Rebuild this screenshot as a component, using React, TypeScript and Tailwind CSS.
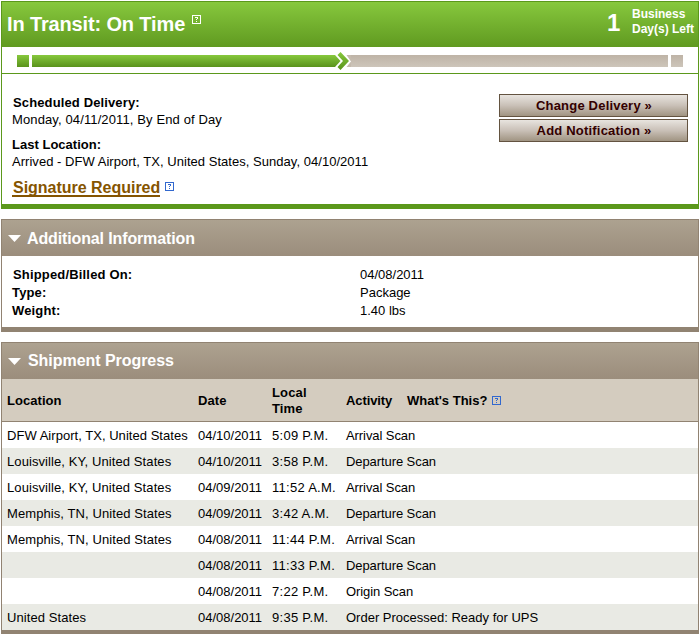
import React from "react";

type Scan = { place: string; date: string; time: string; activity: string };

const scans: Scan[] = [
  { place: "DFW Airport, TX, United States", date: "04/10/2011", time: "5:09 P.M.", activity: "Arrival Scan" },
  { place: "Louisville, KY, United States", date: "04/10/2011", time: "3:58 P.M.", activity: "Departure Scan" },
  { place: "Louisville, KY, United States", date: "04/09/2011", time: "11:52 A.M.", activity: "Arrival Scan" },
  { place: "Memphis, TN, United States", date: "04/09/2011", time: "3:42 A.M.", activity: "Departure Scan" },
  { place: "Memphis, TN, United States", date: "04/08/2011", time: "11:44 P.M.", activity: "Arrival Scan" },
  { place: "", date: "04/08/2011", time: "11:33 P.M.", activity: "Departure Scan" },
  { place: "", date: "04/08/2011", time: "7:22 P.M.", activity: "Origin Scan" },
  { place: "United States", date: "04/08/2011", time: "9:35 P.M.", activity: "Order Processed: Ready for UPS" },
];

function Help({ className }: { className: string }) {
  return (
    <svg viewBox="0 0 9 9" width="9" height="9" className={`shrink-0 ${className}`} fill="currentColor" shapeRendering="crispEdges" aria-label="Help">
      <path fillRule="evenodd" d="M0 0H9V9H0ZM1 1V8H8V1Z" />
      <path d="M3 2H6V3H3ZM5 3H6V4H5ZM4 4H5V5H4ZM4 6H5V7H4Z" />
    </svg>
  );
}

function SectionHeader({ title, className }: { title: string; className: string }) {
  return (
    <div className="flex h-9 items-center bg-linear-to-b from-[#ada290] to-[#9b8d7c] pl-1.5 text-white">
      <svg width="13" height="7" viewBox="0 0 13 7" className="shrink-0" fill="currentColor">
        <path d="M0 0H13L6.5 7Z" />
      </svg>
      <h2 className={`text-[16px] leading-5 font-bold whitespace-nowrap ${className}`}>{title}</h2>
    </div>
  );
}

function ActionButton({ label }: { label: string }) {
  return (
    <button className="h-[23px] w-[189px] border border-[#635340] bg-linear-to-b from-[#e8e4df] via-[#c9c0b7] to-[#a09482] pl-px text-center text-[13px] leading-[21px] font-bold tracking-[0.2px] text-[#330000]">
      {label}
    </button>
  );
}

export default function App() {
  return (
    <main className="h-[634px] w-[700px] overflow-hidden bg-white px-px pt-px font-['Liberation_Sans',Arial,sans-serif] text-[13px] leading-[17px] text-black">
      <section className="h-[208px] border border-b-[5px] border-[#5b981b]">
        <header className="flex h-[45px] justify-between bg-linear-to-b from-[#87c83d] to-[#609a20] text-white">
          <div className="flex pl-[5px]">
            <h1 className="w-[178px] pt-[11px] text-[20px] leading-[22px] font-bold tracking-[-0.14px] whitespace-nowrap">In Transit: On Time</h1>
            <Help className="mt-[13px] ml-[7px]" />
          </div>
          <div className="flex w-[91px] font-bold">
            <span className="w-[25px] pt-[7px] text-[24px] leading-7">1</span>
            <span className="pt-[5px] text-[12px] leading-[15px] whitespace-nowrap">
              Business
              <br />
              Day(s) Left
            </span>
          </div>
        </header>
        <div className="flex h-[27px] border-b border-[#5b981b] pl-[15px]">
          <div className="mt-2 h-3 w-3 bg-linear-to-b from-[#87c83d] to-[#5a931b]" />
          <div className="mt-2 ml-[3px] h-3 w-[303px] bg-linear-to-b from-[#87c83d] to-[#5a931b]" />
          <svg width="16" height="18" viewBox="0 0 16 18" className="mt-[5px] shrink-0">
            <defs>
              <linearGradient id="progress" x2="0" y2="1">
                <stop stopColor="#87c83d" />
                <stop offset="1" stopColor="#5a931b" />
              </linearGradient>
            </defs>
            <path d="M11.5 3H16V15H11.5L16 9.500Z" fill="#c4baad" />
            <path d="M0 3L5.500 9L0 15Z" fill="url(#progress)" />
            <path d="M2.500 3L5.500 0L14 9L5.500 18L2.500 15L8 9Z" fill="url(#progress)" />
          </svg>
          <div className="mt-2 h-3 w-[317px] bg-linear-to-b from-[#beb3a6] to-[#cdc5ba]" />
          <div className="mt-2 ml-[3px] h-3 w-3 bg-linear-to-b from-[#beb3a6] to-[#cdc5ba]" />
        </div>
        <div className="flex justify-between pr-2.5 pl-2.5">
          <div className="pt-5 whitespace-nowrap">
            <h3 className="pl-px font-bold tracking-[0.13px]">Scheduled Delivery:</h3>
            <p className="tracking-[0.12px]">Monday, 04/11/2011, By End of Day</p>
            <h3 className="mt-2 font-bold tracking-[0.02px]">Last Location:</h3>
            <p className="tracking-[0.035px]">Arrived - DFW Airport, TX, United States, Sunday, 04/10/2011</p>
            <div className="mt-2 flex">
              <a className="h-[19px] w-[148px] border-b-2 border-[#855400] pl-px text-[16px] leading-5 font-bold tracking-[-0.02px] text-[#855400]">Signature Required</a>
              <Help className="mt-1 ml-[5px] text-[#3268ce]" />
            </div>
          </div>
          <div className="flex flex-col gap-0.5 pt-5">
            <ActionButton label="Change Delivery »" />
            <ActionButton label="Add Notification »" />
          </div>
        </div>
      </section>

      <section className="mt-2.5 h-[113px] border border-b-[5px] border-[#918372]">
        <SectionHeader title="Additional Information" className="ml-1.5 pt-px tracking-[-0.13px]" />
        <dl className="grid grid-cols-[348px_1fr] pt-2.5 pl-2.5 leading-[18px]">
          <dt className="pl-px font-bold tracking-[0.17px]">Shipped/Billed On:</dt>
          <dd>04/08/2011</dd>
          <dt className="font-bold tracking-[0.15px]">Type:</dt>
          <dd>Package</dd>
          <dt className="font-bold tracking-[0.15px]">Weight:</dt>
          <dd>1.40 lbs</dd>
        </dl>
      </section>

      <section className="mt-2.5 h-[293px] border border-b-[5px] border-[#918372]">
        <SectionHeader title="Shipment Progress" className="ml-[7px] tracking-[-0.05px]" />
        <table className="w-full table-fixed border-collapse text-left whitespace-nowrap">
          <colgroup>
            <col className="w-[196px]" />
            <col className="w-[74px]" />
            <col className="w-[74px]" />
            <col />
          </colgroup>
          <thead className="bg-[#d4ccbf] leading-4">
            <tr className="h-[43px] shadow-[inset_0_-1px_0_#918372]">
              <th className="pl-[5px] tracking-[0.05px]">Location</th>
              <th className="tracking-[0.1px]">Date</th>
              <th className="tracking-[0.15px]">
                Local
                <br />
                Time
              </th>
              <th>
                <div className="flex items-center">
                  <span className="w-[61px] tracking-[-0.1px]">Activity</span>
                  <span>What's This?</span>
                  <Help className="ml-[5px] text-[#3268ce]" />
                </div>
              </th>
            </tr>
          </thead>
          <tbody>
            {scans.map((s, i) => (
              <tr key={i} className="h-[26px] even:bg-[#e9eae4]">
                <td className={`pl-[5px] ${i === 0 ? "tracking-[0.035px]" : "tracking-[0.09px]"}`}>{s.place}</td>
                <td>{s.date}</td>
                <td className="tracking-[0.28px]">{s.time}</td>
                <td className={i === 7 ? "" : "tracking-[-0.08px]"}>{s.activity}</td>
              </tr>
            ))}
          </tbody>
        </table>
      </section>
    </main>
  );
}
